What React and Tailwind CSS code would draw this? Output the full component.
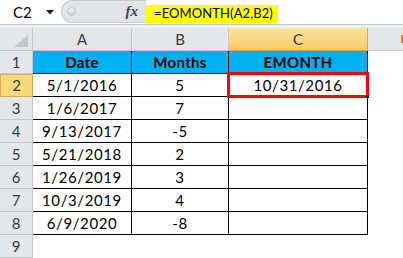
const rows = [
  ["5/1/2016", "5", "10/31/2016"],
  ["1/6/2017", "7", ""],
  ["9/13/2017", "-5", ""],
  ["5/21/2018", "2", ""],
  ["1/26/2019", "3", ""],
  ["10/3/2019", "4", ""],
  ["6/9/2020", "-8", ""],
];

const headCell = "flex items-center justify-center border-r border-b border-[#c5c8cc] bg-[#e4e6ea] text-[15px] text-[#3a3a3a]";
const dataCell = "flex items-center justify-center pt-px border-r border-b border-black text-[15px] tracking-[0.6px] text-black";

const FormulaBar = () => (
  <div className="flex h-[25px] border-b border-[#c3c6ca] bg-white">
    <div className="flex w-[61px] items-center justify-between pl-[13px] pr-[7px]">
      <span className="text-[15px] text-black">C2</span>
      <svg width="8" height="5" viewBox="0 0 8 5">
        <polygon points="0,0 8,0 4,4.5" fill="#1f1f1f" />
      </svg>
    </div>
    <div className="flex h-[23px] w-[85px] items-center justify-between rounded-l-full border border-r-0 border-[#c7c9cc] bg-[#e2e4e7] pl-[5px] pr-[8px]">
      <div className="h-[9px] w-[9px] rounded-full bg-gradient-to-b from-[#f4f5f6] to-[#c9ccd0] border border-[#c0c3c7]" />
      <span className="text-[15px] italic font-bold text-[#444] [font-family:'Liberation_Serif',serif]">fx</span>
    </div>
    <div className="flex-1 pt-[5px]">
      <div className="flex h-[18px] w-[132px] items-center bg-[#ffff00] pl-[8px] text-[13px] tracking-[0.1px] text-black">
        =EOMONTH(A2,B2)
      </div>
    </div>
  </div>
);

const App = () => {
  return (
    <div className="h-[258px] w-[403px] overflow-hidden bg-white [font-family:Lato,'Liberation_Sans',sans-serif]">
      <FormulaBar />
      <div className="h-[3px] bg-[#eef0f2]" />
      <div className="grid grid-cols-[33px_99px_97px_139px_1fr] auto-rows-[23px]">
        <div className="flex items-end justify-end border-r border-b border-[#c5c8cc] bg-[#e4e6ea] pb-[3px] pr-[4px]">
          <svg width="14" height="12" viewBox="0 0 14 12">
            <polygon points="14,0 14,12 0,12" fill="#c4c6c9" />
          </svg>
        </div>
        <div className={headCell}>A</div>
        <div className={headCell}>B</div>
        <div className="flex items-center justify-center border-r border-b border-[#e0a84c] bg-gradient-to-b from-[#fbe39d] to-[#f5cd66] text-[15px] text-[#3a3a3a]">C</div>
        <div className="flex items-center justify-end border-b border-[#c5c8cc] bg-[#e4e6ea]">
          <div className="h-[8px] w-[2px] bg-[#c98a2c]" />
        </div>

        <div className={headCell}>1</div>
        <div className="flex items-center justify-center border-r border-b border-black bg-[#00b0f0] text-[15px] font-bold tracking-[0.3px]">Date</div>
        <div className="flex items-center justify-center border-r border-b border-black bg-[#00b0f0] text-[15px] font-bold tracking-[0.3px]">Months</div>
        <div className="flex items-center justify-center border-r border-b border-black bg-[#00b0f0] text-[15px] font-bold tracking-[0.3px]">EMONTH</div>
        <div />

        {rows.map((row, i) => (
          <div key={i} className="contents">
            <div className={i === 0 ? "flex items-center justify-center border border-[#e0a84c] bg-[#f9d77b] text-[15px] text-[#3a3a3a]" : headCell}>
              {i + 2}
            </div>
            <div className={dataCell}>{row[0]}</div>
            <div className={dataCell}>{row[1]}</div>
            <div className={"relative " + dataCell}>
              {row[2]}
              {i === 0 && (
                <div className="absolute -left-[2px] -top-[2px] h-[26px] w-[142px] border-[3px] border-[#ff0000]">
                  <div className="absolute -bottom-[3px] -right-[3px] h-[3px] w-[3px] bg-black" />
                </div>
              )}
            </div>
            <div />
          </div>
        ))}

        <div className={headCell}>9</div>
        <div />
        <div />
        <div />
        <div />
      </div>
    </div>
  );
};

export default App;
